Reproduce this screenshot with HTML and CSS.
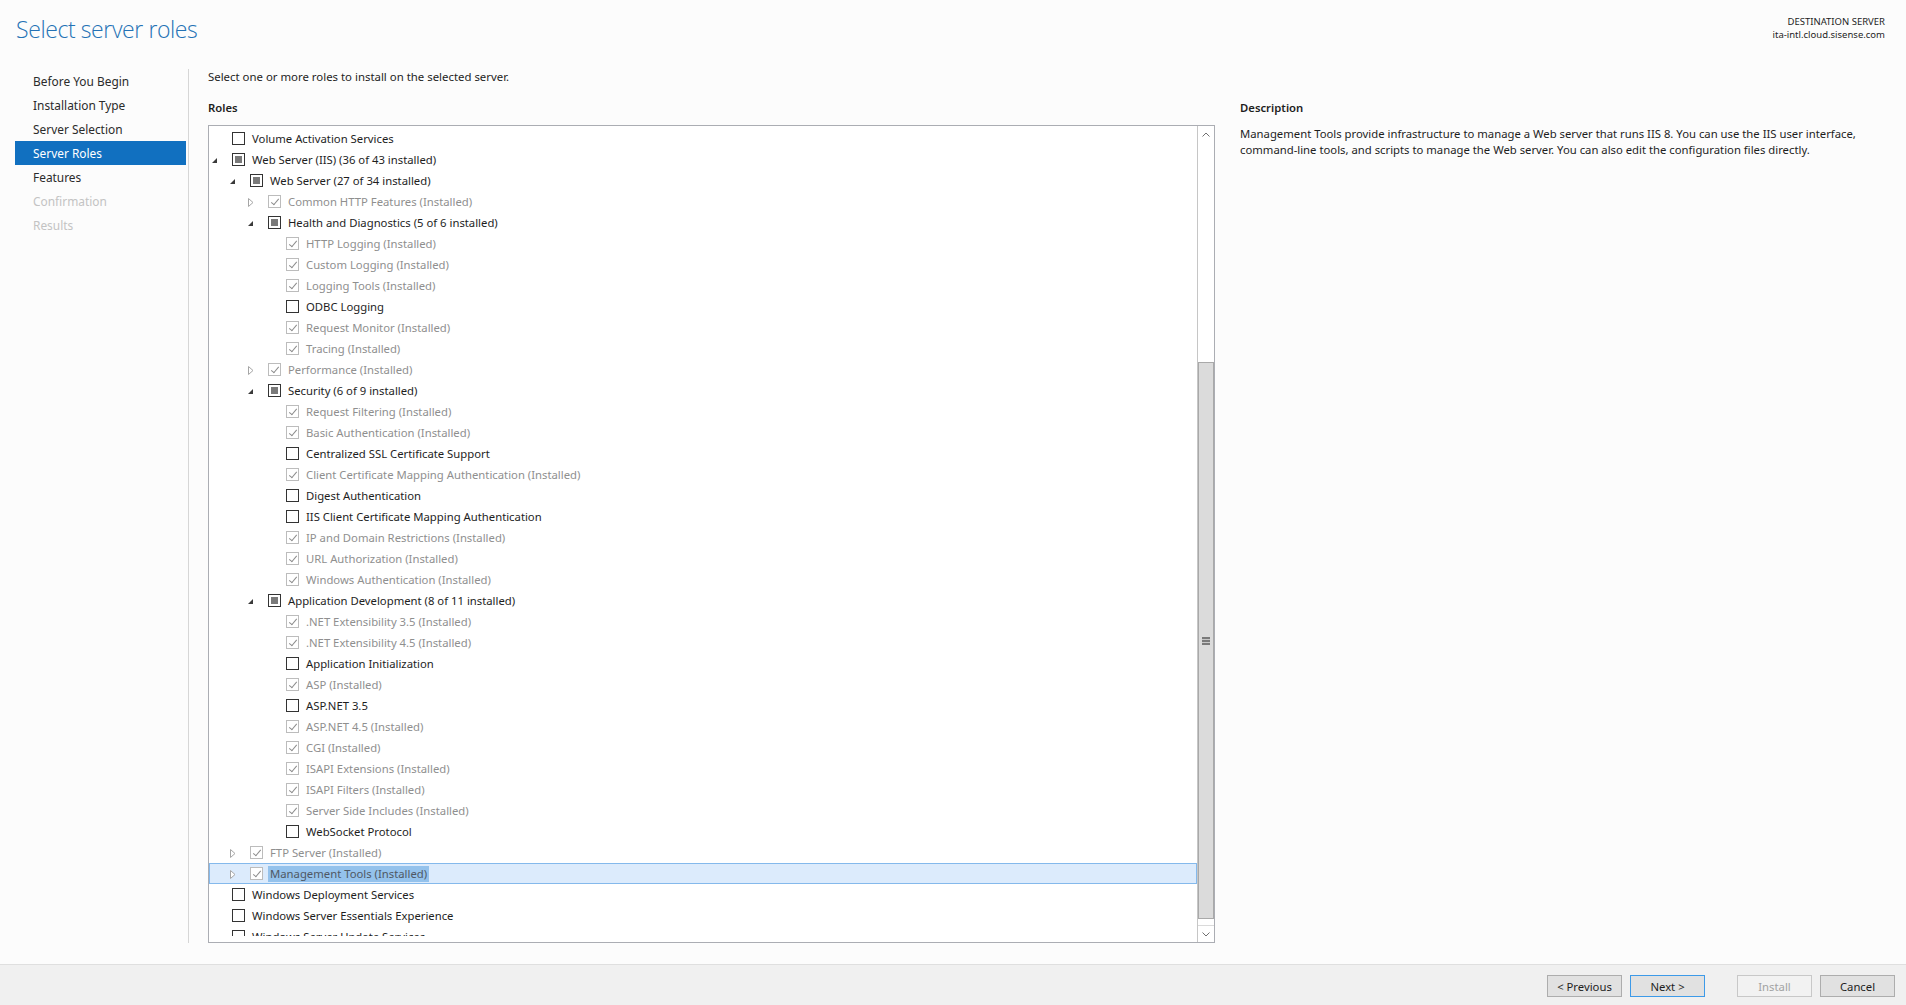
FILE: index.html
```html
<!DOCTYPE html>
<html lang="en">
<head>
<meta charset="utf-8">
<title>Add Roles and Features Wizard</title>
<link rel="stylesheet" href="styles.css">
</head>
<body>
<div class="wizard">
  <header class="top">
    <h1 class="title">Select server roles</h1>
    <div class="dest">
      <div>DESTINATION SERVER</div>
      <div>ita-intl.cloud.sisense.com</div>
    </div>
  </header>

  <div class="body">
    <nav class="steps">
      <div class="step">Before You Begin</div>
      <div class="step">Installation Type</div>
      <div class="step">Server Selection</div>
      <div class="step current">Server Roles</div>
      <div class="step">Features</div>
      <div class="step off">Confirmation</div>
      <div class="step off">Results</div>
    </nav>

    <main class="content">
      <p class="intro">Select one or more roles to install on the selected server.</p>
      <div class="columns">
        <section class="roles">
          <h2 class="heading">Roles</h2>
          <div class="treebox">
            <div class="tree">
              <div class="row l0"><span class="exp"></span><span class="cb"></span><span class="label">Volume Activation Services</span></div>
              <div class="row l0"><span class="exp open"></span><span class="cb part"></span><span class="label">Web Server (IIS) (36 of 43 installed)</span></div>
              <div class="row l1"><span class="exp open"></span><span class="cb part"></span><span class="label">Web Server (27 of 34 installed)</span></div>
              <div class="row l2"><span class="exp shut"><svg width="6" height="9" viewBox="0 0 6 9"><path d="M0.5 0.5 L5 4.5 L0.5 8.5 Z"/></svg></span><span class="cb on"></span><span class="label dim">Common HTTP Features (Installed)</span></div>
              <div class="row l2"><span class="exp open"></span><span class="cb part"></span><span class="label">Health and Diagnostics (5 of 6 installed)</span></div>
              <div class="row l3"><span class="exp"></span><span class="cb on"></span><span class="label dim">HTTP Logging (Installed)</span></div>
              <div class="row l3"><span class="exp"></span><span class="cb on"></span><span class="label dim">Custom Logging (Installed)</span></div>
              <div class="row l3"><span class="exp"></span><span class="cb on"></span><span class="label dim">Logging Tools (Installed)</span></div>
              <div class="row l3"><span class="exp"></span><span class="cb"></span><span class="label">ODBC Logging</span></div>
              <div class="row l3"><span class="exp"></span><span class="cb on"></span><span class="label dim">Request Monitor (Installed)</span></div>
              <div class="row l3"><span class="exp"></span><span class="cb on"></span><span class="label dim">Tracing (Installed)</span></div>
              <div class="row l2"><span class="exp shut"><svg width="6" height="9" viewBox="0 0 6 9"><path d="M0.5 0.5 L5 4.5 L0.5 8.5 Z"/></svg></span><span class="cb on"></span><span class="label dim">Performance (Installed)</span></div>
              <div class="row l2"><span class="exp open"></span><span class="cb part"></span><span class="label">Security (6 of 9 installed)</span></div>
              <div class="row l3"><span class="exp"></span><span class="cb on"></span><span class="label dim">Request Filtering (Installed)</span></div>
              <div class="row l3"><span class="exp"></span><span class="cb on"></span><span class="label dim">Basic Authentication (Installed)</span></div>
              <div class="row l3"><span class="exp"></span><span class="cb"></span><span class="label">Centralized SSL Certificate Support</span></div>
              <div class="row l3"><span class="exp"></span><span class="cb on"></span><span class="label dim">Client Certificate Mapping Authentication (Installed)</span></div>
              <div class="row l3"><span class="exp"></span><span class="cb"></span><span class="label">Digest Authentication</span></div>
              <div class="row l3"><span class="exp"></span><span class="cb"></span><span class="label">IIS Client Certificate Mapping Authentication</span></div>
              <div class="row l3"><span class="exp"></span><span class="cb on"></span><span class="label dim">IP and Domain Restrictions (Installed)</span></div>
              <div class="row l3"><span class="exp"></span><span class="cb on"></span><span class="label dim">URL Authorization (Installed)</span></div>
              <div class="row l3"><span class="exp"></span><span class="cb on"></span><span class="label dim">Windows Authentication (Installed)</span></div>
              <div class="row l2"><span class="exp open"></span><span class="cb part"></span><span class="label">Application Development (8 of 11 installed)</span></div>
              <div class="row l3"><span class="exp"></span><span class="cb on"></span><span class="label dim">.NET Extensibility 3.5 (Installed)</span></div>
              <div class="row l3"><span class="exp"></span><span class="cb on"></span><span class="label dim">.NET Extensibility 4.5 (Installed)</span></div>
              <div class="row l3"><span class="exp"></span><span class="cb"></span><span class="label">Application Initialization</span></div>
              <div class="row l3"><span class="exp"></span><span class="cb on"></span><span class="label dim">ASP (Installed)</span></div>
              <div class="row l3"><span class="exp"></span><span class="cb"></span><span class="label">ASP.NET 3.5</span></div>
              <div class="row l3"><span class="exp"></span><span class="cb on"></span><span class="label dim">ASP.NET 4.5 (Installed)</span></div>
              <div class="row l3"><span class="exp"></span><span class="cb on"></span><span class="label dim">CGI (Installed)</span></div>
              <div class="row l3"><span class="exp"></span><span class="cb on"></span><span class="label dim">ISAPI Extensions (Installed)</span></div>
              <div class="row l3"><span class="exp"></span><span class="cb on"></span><span class="label dim">ISAPI Filters (Installed)</span></div>
              <div class="row l3"><span class="exp"></span><span class="cb on"></span><span class="label dim">Server Side Includes (Installed)</span></div>
              <div class="row l3"><span class="exp"></span><span class="cb"></span><span class="label">WebSocket Protocol</span></div>
              <div class="row l1"><span class="exp shut"><svg width="6" height="9" viewBox="0 0 6 9"><path d="M0.5 0.5 L5 4.5 L0.5 8.5 Z"/></svg></span><span class="cb on"></span><span class="label dim">FTP Server (Installed)</span></div>
              <div class="row l1 sel"><span class="exp shut"><svg width="6" height="9" viewBox="0 0 6 9"><path d="M0.5 0.5 L5 4.5 L0.5 8.5 Z"/></svg></span><span class="cb on"></span><span class="label dim">Management Tools (Installed)</span></div>
              <div class="row l0"><span class="exp"></span><span class="cb"></span><span class="label">Windows Deployment Services</span></div>
              <div class="row l0"><span class="exp"></span><span class="cb"></span><span class="label">Windows Server Essentials Experience</span></div>
              <div class="row l0"><span class="exp"></span><span class="cb"></span><span class="label">Windows Server Update Services</span></div>
            </div>
            <div class="vscroll">
              <div class="sbtn up"><svg width="8" height="5" viewBox="0 0 8 5"><path d="M0.5 4.5 L4 1 L7.5 4.5"/></svg></div>
              <div class="track">
                <div class="thumb"><span class="grip"></span></div>
              </div>
              <div class="sbtn down"><svg width="8" height="5" viewBox="0 0 8 5"><path d="M0.5 0.5 L4 4 L7.5 0.5"/></svg></div>
            </div>
          </div>
        </section>

        <section class="desc">
          <h2 class="heading">Description</h2>
          <p class="desc-text">Management Tools provide infrastructure to manage a Web server that runs IIS 8. You can use the IIS user interface,<br>command-line tools, and scripts to manage the Web server. You can also edit the configuration files directly.</p>
        </section>
      </div>
    </main>
  </div>

  <footer class="buttons">
    <button class="btn">&lt; Previous</button>
    <button class="btn default">Next &gt;</button>
    <button class="btn disabled">Install</button>
    <button class="btn">Cancel</button>
  </footer>
</div>
</body>
</html>
```

FILE: styles.css
```css
* {
  box-sizing: border-box;
}

html, body {
  margin: 0;
  padding: 0;
}

body {
  background: #fcfcfc;
  font-family: "Noto Sans", "Open Sans", sans-serif;
  font-size: 11.3px;
  color: #1e1e1e;
}

.wizard {
  width: 1906px;
  height: 1005px;
  display: flex;
  flex-direction: column;
  overflow: hidden;
}

/* ---- header ---- */
.top {
  flex: none;
  height: 69px;
  display: flex;
  justify-content: space-between;
  align-items: flex-start;
}

.title {
  margin: 0;
  padding: 13px 0 0 16px;
  font-family: "Open Sans", "Noto Sans", sans-serif;
  font-weight: 300;
  font-size: 23px;
  letter-spacing: -0.4px;
  line-height: 32px;
  color: #2472b5;
}

.dest {
  padding: 16px 21px 0 0;
  text-align: right;
  font-size: 9.5px;
  line-height: 12.5px;
  color: #1e1e1e;
}

/* ---- body ---- */
.body {
  flex: 1;
  min-height: 0;
  display: flex;
  padding-bottom: 21px;
}

.steps {
  flex: none;
  width: 189px;
  padding: 0 2px 0 15px;
  border-right: 1px solid #d6d6d6;
}

.step {
  height: 24px;
  line-height: 24px;
  padding-left: 18px;
  font-size: 11.9px;
  color: #2b2b2b;
}

.step.current {
  background: #1170c0;
  color: #fff;
}

.step.off {
  color: #c3c3c3;
}

.content {
  flex: 1;
  min-height: 0;
  display: flex;
  flex-direction: column;
  padding-left: 19px;
}

.intro {
  margin: 0;
  font-size: 11.4px;
  line-height: 16px;
}

.columns {
  flex: 1;
  min-height: 0;
  display: flex;
  gap: 25px;
  margin-top: 15px;
}

.heading {
  margin: 0;
  font-size: 11.3px;
  font-weight: 600;
  line-height: 16px;
  color: #1e1e1e;
}

.roles {
  flex: none;
  width: 1007px;
  min-height: 0;
  display: flex;
  flex-direction: column;
}

.treebox {
  flex: 1;
  min-height: 0;
  margin-top: 9px;
  display: flex;
  border: 1px solid #abadb3;
  background: #fff;
  overflow: hidden;
}

/* ---- tree ---- */
.tree {
  flex: 1;
  min-height: 0;
  padding-top: 2px;
  margin-bottom: 6px;
  overflow: hidden;
}

.row {
  height: 21px;
  display: flex;
  align-items: center;
  white-space: nowrap;
}

.row.l1 { padding-left: 18px; }
.row.l2 { padding-left: 36px; }
.row.l3 { padding-left: 54px; }

.row.sel {
  background: #dcebfc;
  box-shadow: inset 0 0 0 1px #84b9ec;
}

.exp {
  width: 23px;
  height: 21px;
  flex: none;
  display: flex;
  align-items: center;
}

.exp.open::before {
  content: "";
  margin: 2px 0 0 3px;
  border-left: 5px solid transparent;
  border-bottom: 5px solid #3a3a3a;
}

.exp.shut svg {
  display: block;
  margin: 2px 0 0 3px;
  fill: #fff;
  stroke: #a6a6a6;
  stroke-width: 1;
}

.cb {
  position: relative;
  flex: none;
  width: 13px;
  height: 13px;
  border: 1px solid #333;
  background: #fff;
}

.cb.part::after {
  content: "";
  position: absolute;
  inset: 2px;
  background: #7a7a7a;
}

.cb.on {
  border-color: #bcbcbc;
}

.cb.on::after {
  content: "";
  position: absolute;
  left: 3.5px;
  top: 1px;
  width: 3px;
  height: 7px;
  border: solid #8c8c8c;
  border-width: 0 1.3px 1.3px 0;
  transform: rotate(40deg);
}

.label {
  margin-left: 5px;
  padding: 0 2px;
  line-height: 16px;
  color: #1e1e1e;
}

.label.dim {
  color: #8f8f8f;
}

.row.sel .label {
  background: #94c2ec;
  color: #4f5864;
}

/* ---- scrollbar ---- */
.vscroll {
  width: 17px;
  flex: none;
  display: flex;
  flex-direction: column;
  border-left: 1px solid #c6c6c6;
  background: #fff;
}

.sbtn {
  flex: none;
  height: 17px;
  display: flex;
  align-items: center;
  justify-content: center;
}

.sbtn svg path {
  fill: none;
  stroke: #707070;
  stroke-width: 1;
}

.sbtn.down {
  border-top: 1px solid #dadada;
}

.track {
  flex: 1;
  min-height: 0;
  padding-top: 219px;
}

.thumb {
  height: 557px;
  background: #dbdbdb;
  border: 1px solid #a9a9a9;
  display: flex;
  align-items: center;
  justify-content: center;
}

.grip {
  width: 8px;
  height: 8px;
  background: repeating-linear-gradient(to bottom, #7a7a7a 0 2px, #c8c8c8 2px 3px);
}

/* ---- description ---- */
.desc {
  flex: 1;
}

.desc-text {
  margin: 10px 0 0;
  line-height: 16px;
  color: #1e1e1e;
}

/* ---- footer ---- */
.buttons {
  height: 41px;
  flex: none;
  border-top: 1px solid #dfdfdf;
  background: #f0f0f0;
  display: flex;
  align-items: flex-start;
  padding: 10px 11px 0 0;
  justify-content: flex-end;
}

.btn {
  width: 75px;
  height: 22px;
  margin-left: 8px;
  padding: 0;
  font-family: "Noto Sans", "Open Sans", sans-serif;
  font-size: 11.3px;
  color: #1e1e1e;
  background: #e1e1e1;
  border: 1px solid #adadad;
  border-radius: 0;
}

.btn.default {
  border-color: #3d9ae8;
}

.btn.disabled {
  margin-left: 32px;
  color: #a3a3a3;
  background: #f2f2f2;
  border-color: #c8c8c8;
}
```
